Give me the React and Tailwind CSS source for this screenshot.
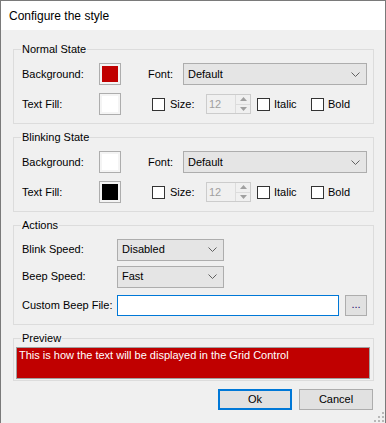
import React from 'react';

const font = { fontFamily: '"Liberation Sans", Arial, sans-serif' };

const Chevron = () => (
  <svg width="9" height="5" viewBox="0 0 9 5" className="shrink-0">
    <path d="M0.5 0.5 L4.5 4.5 L8.5 0.5" fill="none" stroke="#606060" strokeWidth="1" />
  </svg>
);

const Combo = ({ value, width }) => (
  <div className={`flex items-center h-[22px] border border-[#adadad] bg-[#e5e5e5] pl-[4px] pr-[6px] ${width}`}>
    <span className="flex-1 text-black">{value}</span>
    <Chevron />
  </div>
);

const Check = () => <div className="w-[13px] h-[13px] border border-[#333333] bg-white shrink-0" />;

const Swatch = ({ color }) => (
  <div className="w-[22px] h-[22px] border border-[#adadad] bg-[#f4f4f4] p-[2px] shrink-0">
    <div className={`w-full h-full ${color}`} />
  </div>
);

const Spinner = () => (
  <div className="flex items-stretch w-[45px] h-[20px] border border-[#cccccc] bg-[#f0f0f0]">
    <span className="flex-1 pl-[2px] leading-[18px] text-[#a0a0a0]">12</span>
    <div className="flex flex-col w-[15px] border-l border-[#dcdcdc]">
      <div className="flex-1 flex items-center justify-center border-b border-[#dcdcdc]">
        <svg width="7" height="4" viewBox="0 0 7 4"><path d="M0 4 L3.5 0 L7 4 Z" fill="#a0a0a0" /></svg>
      </div>
      <div className="flex-1 flex items-center justify-center">
        <svg width="7" height="4" viewBox="0 0 7 4"><path d="M0 0 L3.5 4 L7 0 Z" fill="#a0a0a0" /></svg>
      </div>
    </div>
  </div>
);

const Group = ({ title, height, children }) => (
  <div className={`relative ml-[12px] w-[361px] border border-[#dcdcdc] ${height}`}>
    <span className="absolute -top-[7px] left-[7px] px-px leading-[13px] bg-[#f0f0f0] text-black">{title}</span>
    {children}
  </div>
);

const StateGroup = ({ title, bg, fill }) => (
  <Group title={title} height="h-[75px]">
    <div className="flex items-center h-[22px] mt-[13px] pl-[8px]">
      <span className="w-[77px]">Background:</span>
      <Swatch color={bg} />
      <span className="ml-[27px] w-[35px]">Font:</span>
      <Combo value="Default" width="w-[184px]" />
    </div>
    <div className="flex items-center h-[22px] mt-[8px] pl-[8px]">
      <span className="w-[77px]">Text Fill:</span>
      <Swatch color={fill} />
      <div className="ml-[31px]"><Check /></div>
      <span className="ml-[5px] w-[36px]">Size:</span>
      <Spinner />
      <div className="ml-[6px]"><Check /></div>
      <span className="ml-[4px] w-[37px]">Italic</span>
      <Check />
      <span className="ml-[4px]">Bold</span>
    </div>
  </Group>
);

export default function App() {
  return (
    <div style={font} className="relative w-[386px] h-[423px] bg-[#f0f0f0] border-l border-t border-r border-[#7a7a7a] text-[11px] text-black flex flex-col overflow-hidden">
      <div className="h-[29px] bg-white flex items-center pl-[8px] text-[12px] shrink-0">
        Configure the style
      </div>

      <div className="mt-[19px]">
        <StateGroup title="Normal State" bg="bg-[#c00000]" fill="bg-white" />
      </div>

      <div className="mt-[13px]">
        <StateGroup title="Blinking State" bg="bg-white" fill="bg-black" />
      </div>

      <div className="mt-[13px]">
        <Group title="Actions" height="h-[100px]">
          <div className="flex items-center h-[21px] mt-[13px] pl-[8px]">
            <span className="w-[95px]">Blink Speed:</span>
            <Combo value="Disabled" width="w-[107px]" />
          </div>
          <div className="flex items-center h-[21px] mt-[6px] pl-[8px]">
            <span className="w-[95px]">Beep Speed:</span>
            <Combo value="Fast" width="w-[107px]" />
          </div>
          <div className="flex items-center h-[21px] mt-[8px] pl-[8px]">
            <span className="w-[95px]">Custom Beep File:</span>
            <div className="w-[222px] h-[21px] border border-[#0078d7] bg-white" />
            <div className="ml-[6px] w-[22px] h-[21px] border border-[#adadad] bg-[#e1e1e1] flex items-center justify-center text-[#1a0a6b] leading-none pb-[2px]">...</div>
          </div>
        </Group>
      </div>

      <div className="mt-[13px]">
        <Group title="Preview" height="h-[43px]">
          <div className="mt-[8px] ml-[2px] w-[354px] h-[32px] border border-[#a0a0a0] bg-[#c00000] text-white pl-[2px] leading-[14px]">
            This is how the text will be displayed in the Grid Control
          </div>
        </Group>
      </div>

      <div className="flex justify-end gap-[7px] mt-[8px] mr-[12px]">
        <button className="w-[74px] h-[21px] border-2 border-[#0078d7] bg-[#e1e1e1] text-black leading-none">Ok</button>
        <button className="w-[74px] h-[21px] border border-[#adadad] bg-[#e1e1e1] text-black leading-none">Cancel</button>
      </div>

      <svg width="10" height="10" viewBox="0 0 10 10" className="absolute right-[1px] bottom-[1px]">
        {[[8, 0], [8, 4], [4, 4], [8, 8], [4, 8], [0, 8]].map(([x, y]) => (
          <rect key={`${x}-${y}`} x={x} y={y} width="2" height="2" fill="#b8b8b8" />
        ))}
      </svg>
    </div>
  );
}
